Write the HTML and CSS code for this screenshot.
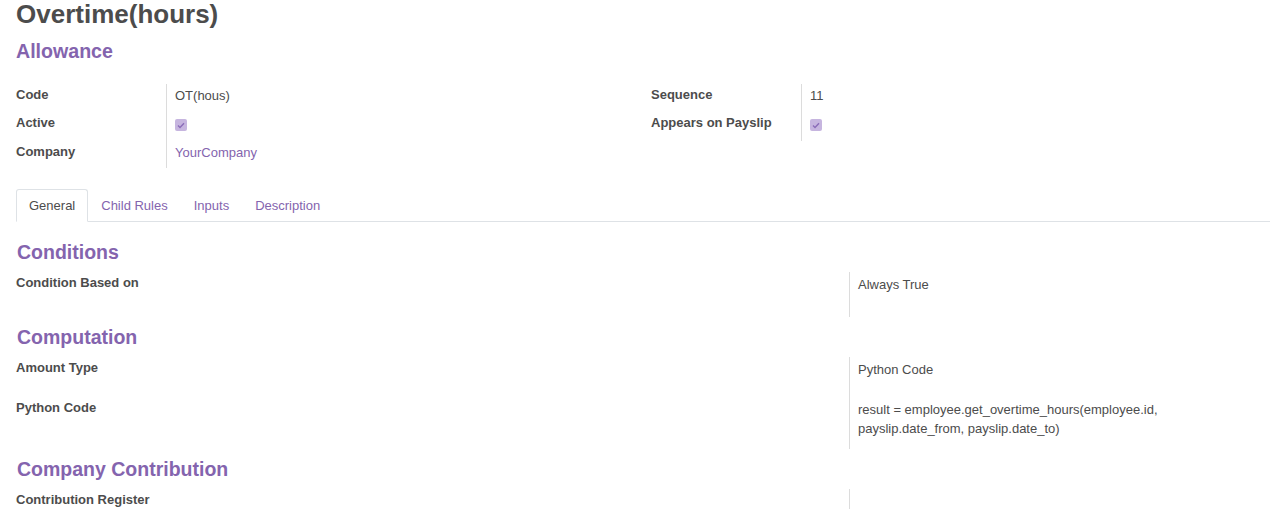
FILE: index.html
```html
<!DOCTYPE html>
<html>
<head>
<meta charset="utf-8">
<link rel="stylesheet" href="styles.css">
</head>
<body>
<div class="sheet">
  <h1 class="title">Overtime(hours)</h1>
  <h2 class="subtitle">Allowance</h2>

  <div class="top-groups">
    <div class="group">
      <div class="labels">
        <div class="lbl">Code</div>
        <div class="lbl">Active</div>
        <div class="lbl">Company</div>
      </div>
      <div class="values">
        <div class="val">OT(hous)</div>
        <div class="val"><span class="check"><svg width="8" height="7" viewBox="0 0 8 7"><path d="M1 3.6 L3 5.4 L7 1.2" fill="none" stroke="#8a6cb8" stroke-width="1.4"/></svg></span></div>
        <div class="val link">YourCompany</div>
      </div>
    </div>
    <div class="group second">
      <div class="labels">
        <div class="lbl">Sequence</div>
        <div class="lbl">Appears on Payslip</div>
      </div>
      <div class="values short">
        <div class="val">11</div>
        <div class="val"><span class="check"><svg width="8" height="7" viewBox="0 0 8 7"><path d="M1 3.6 L3 5.4 L7 1.2" fill="none" stroke="#8a6cb8" stroke-width="1.4"/></svg></span></div>
      </div>
    </div>
  </div>

  <ul class="tabs">
    <li class="tab active">General</li>
    <li class="tab">Child Rules</li>
    <li class="tab">Inputs</li>
    <li class="tab">Description</li>
  </ul>

  <h3 class="section first">Conditions</h3>
  <div class="wide">
    <div class="wlabels">
      <div class="wlbl">Condition Based on</div>
    </div>
    <div class="wvalues cond">
      <div class="wval">Always True</div>
    </div>
  </div>

  <h3 class="section">Computation</h3>
  <div class="wide">
    <div class="wlabels">
      <div class="wlbl">Amount Type</div>
      <div class="wlbl py">Python Code</div>
    </div>
    <div class="wvalues comp">
      <div class="wval">Python Code</div>
      <div class="wval code">result = employee.get_overtime_hours(employee.id,<br>payslip.date_from, payslip.date_to)</div>
    </div>
  </div>

  <h3 class="section">Company Contribution</h3>
  <div class="wide">
    <div class="wlabels">
      <div class="wlbl">Contribution Register</div>
    </div>
    <div class="wvalues contrib"></div>
  </div>
</div>
</body>
</html>
```
FILE: styles.css
```css
html, body {
  margin: 0;
  padding: 0;
  background: #ffffff;
}
body {
  font-family: "Liberation Sans", Arial, sans-serif;
  font-size: 13px;
  color: #4c4c4c;
  overflow: hidden;
}
.sheet {
  padding: 0 16px;
  width: 1254px;
}
.title {
  margin: 0;
  font-size: 26px;
  line-height: 28px;
  font-weight: bold;
  color: #4c4c4c;
}
.subtitle {
  margin: 11px 0 0 0;
  font-size: 19.6px;
  line-height: 24px;
  font-weight: bold;
  color: #8464ae;
}
.top-groups {
  display: flex;
  align-items: flex-start;
  height: 84px;
  margin-top: 21px;
}
.group {
  display: flex;
  width: 635px;
  flex-shrink: 0;
}
.group.second {
  flex: 1;
  width: auto;
}
.labels {
  width: 150px;
  flex-shrink: 0;
  padding-top: 2.5px;
}
.lbl {
  height: 28.5px;
  font-weight: bold;
  line-height: 16px;
}
.values {
  box-sizing: border-box;
  border-left: 1px solid #dcdcdc;
  padding-left: 8px;
  height: 84px;
  padding-top: 4px;
}
.values.short {
  height: 57px;
}
.val {
  height: 28.5px;
  line-height: 16px;
}
.link {
  color: #8464ae;
}
.check {
  display: inline-flex;
  align-items: center;
  justify-content: center;
  width: 12px;
  height: 12px;
  border-radius: 2px;
  background: #c6b5df;
  margin-top: 2px;
}
.tabs {
  list-style: none;
  display: flex;
  margin: 21px 0 0 0;
  padding: 0;
  border-bottom: 1px solid #dee2e6;
}
.tab {
  padding: 8px 12px 7px 12px;
  line-height: 16px;
  color: #8464ae;
  border: 1px solid transparent;
  border-bottom: none;
  margin-bottom: -1px;
  border-radius: 3px 3px 0 0;
}
.tab.active {
  color: #4c4c4c;
  border-color: #dee2e6;
  background: #fff;
  border-bottom: 1px solid #fff;
}
.section {
  margin: 8px 0 0 1px;
  font-size: 19.5px;
  line-height: 24px;
  font-weight: bold;
  color: #8464ae;
}
.section.first {
  margin-top: 18px;
}
.wide {
  display: flex;
  margin-top: 8px;
}
.wlabels {
  width: 833px;
  flex-shrink: 0;
  padding-top: 3px;
}
.wlbl {
  font-weight: bold;
  line-height: 16px;
}
.wlbl.py {
  margin-top: 24px;
}
.wvalues {
  border-left: 1px solid #dcdcdc;
  padding-left: 8px;
  flex: 1;
  box-sizing: border-box;
  padding-top: 3px;
}
.wvalues.cond {
  height: 45px;
}
.wvalues.comp {
  height: 92px;
}
.wvalues.contrib {
  height: 20px;
}
.wval {
  line-height: 19px;
}
.wval.code {
  margin-top: 21px;
}
```
